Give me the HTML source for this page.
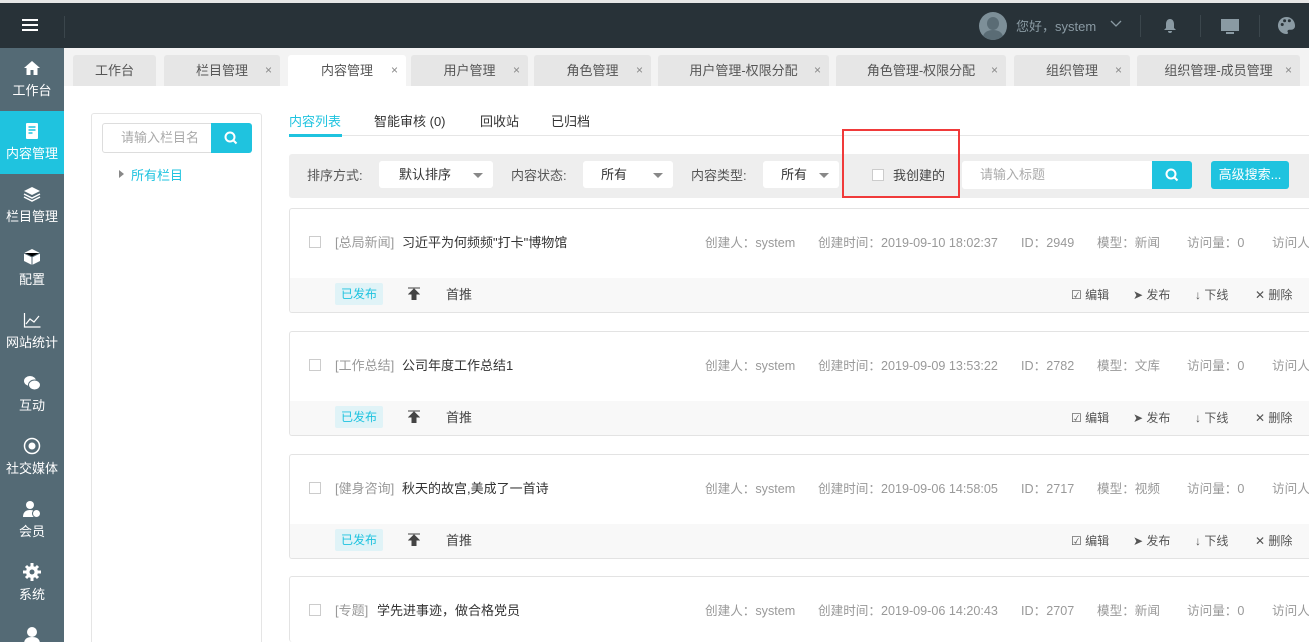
<!DOCTYPE html>
<html style="overflow:hidden"><head><meta charset="utf-8"><style>
*{box-sizing:border-box;margin:0;padding:0}
html,body{width:1309px;height:642px;overflow:hidden}
body{font-family:"Liberation Sans","Noto Sans CJK SC",sans-serif;font-size:13px;color:#333;background:#fff;position:relative}
.abs{position:absolute}
.top{left:0;top:0;width:1309px;height:48px;background:#283238;border-top:3px solid #e6e6e6}
.side{left:0;top:48px;width:64px;height:594px;background:#546a75;overflow:hidden}
.si{position:absolute;left:0;width:64px;height:63px;color:#fff;text-align:center;font-size:13px}
.si .ic{display:block;margin:11px auto 3px;width:18px;height:18px}
.si.act{background:#1fc3df}
.tabbar{left:64px;top:48px;width:1245px;height:38px;background:#f3f3f3;overflow:hidden}
.tab{position:absolute;top:7px;height:31px;background:#e6e6e6;border-radius:3px 3px 0 0;color:#555;font-size:13px;line-height:31px;text-align:center}
.tab.a{background:#fff}
.tab .x{position:absolute;right:8px;top:0;color:#888;font-size:12px}
.tree{left:91px;top:113px;width:171px;height:529px;border:1px solid #e5e5e5;border-bottom:0;border-radius:3px 3px 0 0}
.inp{border:1px solid #ddd;background:#fff;color:#aaa;border-radius:3px}
.btn{background:#1fc3df;color:#fff}
.filter{left:289px;top:154px;width:1020px;height:44px;background:#eeeeee;border-radius:3px 0 0 3px}
.lbl{color:#555;font-size:13px;position:absolute;top:11px}
.sel{position:absolute;top:7px;height:27px;background:#fff;border-radius:3px;font-size:13px;line-height:27px;color:#333}
.sel:after{content:"";position:absolute;right:10px;top:12px;border:5px solid transparent;border-top:5px solid #888;border-bottom:0}
.card{position:absolute;left:289px;width:1020px;height:105px;border:1px solid #e3e3e3;border-right:0;border-radius:3px 0 0 3px;background:#fff;overflow:hidden}
.card .ft{position:absolute;left:0;top:69px;width:100%;height:34px;background:#f8f8f8}
.cb{position:absolute;left:19px;top:27px;width:12px;height:12px;border:1px solid #ccc;background:#fff}
.cat{position:absolute;left:45px;top:23px;color:#999}
.tt{position:absolute;top:23px;color:#333}
.meta{position:absolute;top:23px;color:#999;font-size:12.6px;white-space:nowrap}
.pub{position:absolute;left:45px;top:5px;height:22px;width:48px;background:#e0f3f7;color:#1fc3df;font-size:12px;line-height:22px;text-align:center;border-radius:2px}
.up{position:absolute;left:118px;top:9px}
.tj{position:absolute;left:156px;top:6px;color:#444}
.op{position:absolute;top:8px;color:#555;font-size:12px}
</style></head><body>
<div class="abs top">
  <div class="abs" style="left:22px;top:16px;width:16px;height:2px;background:#fff;box-shadow:0 5px 0 #fff,0 10px 0 #fff"></div>
  <div class="abs" style="left:64px;top:13px;width:1px;height:22px;background:#3b464c"></div>
  <div class="abs" style="left:979px;top:9px;width:28px;height:28px;border-radius:50%;background:#7d8f98;overflow:hidden"><div style="position:absolute;left:8px;top:5px;width:12px;height:13px;border-radius:50%;background:#5a6c75"></div><div style="position:absolute;left:4px;top:18px;width:20px;height:14px;border-radius:50%;background:#5a6c75"></div></div>
  <div class="abs" style="left:1016px;top:13px;color:#8a9aa3;font-size:13px">您好，system</div>
  <svg class="abs" style="left:1110px;top:17px" width="12" height="8" viewBox="0 0 12 8"><path d="M1 1l5 5 5-5" stroke="#8a9aa3" fill="none" stroke-width="1.3"/></svg>
  <div class="abs" style="left:1140px;top:12px;width:1px;height:22px;background:#3b464c"></div>
  <svg class="abs" style="left:1163px;top:15px" width="14" height="15" viewBox="0 0 14 15"><path d="M7 1C4 1 3 4 3 6v4l-2 2h12l-2-2V6c0-2-1-5-4-5zM5 13a2 2 0 0 0 4 0z" fill="#8a9aa3"/></svg>
  <div class="abs" style="left:1200px;top:12px;width:1px;height:22px;background:#3b464c"></div>
  <div class="abs" style="left:1221px;top:16px;width:18px;height:12px;background:#8a9aa3"></div>
  <div class="abs" style="left:1226px;top:29px;width:8px;height:2px;background:#8a9aa3"></div>
  <div class="abs" style="left:1259px;top:12px;width:1px;height:22px;background:#3b464c"></div>
  <svg class="abs" style="left:1277px;top:13px" width="19" height="19" viewBox="0 0 20 20"><path d="M10 1a9 9 0 0 0 0 18c1.5 0 2-1 1.3-2s0-2.5 1.5-2.5H15a4 4 0 0 0 4-4C19 5 15 1 10 1z" fill="#8a9aa3"/><circle cx="5.5" cy="9" r="1.6" fill="#283238"/><circle cx="8" cy="5" r="1.6" fill="#283238"/><circle cx="13" cy="5" r="1.6" fill="#283238"/></svg>
</div>
<div class="abs side">
  <div class="si" style="top:0"><svg class="ic" viewBox="0 0 18 18"><path d="M9 2L1 9h2.5v7h4v-5h3v5h4V9H17z" fill="#fff"/></svg>工作台</div>
  <div class="si act" style="top:63px"><svg class="ic" viewBox="0 0 18 18"><rect x="3" y="1" width="12" height="16" rx="1" fill="#fff"/><path d="M5.5 5h7M5.5 8h7M5.5 11h4" stroke="#1fc3df" stroke-width="1.5"/></svg>内容管理</div>
  <div class="si" style="top:126px"><svg class="ic" viewBox="0 0 18 18"><path d="M9 2l8 4-8 4-8-4z" fill="#fff"/><path d="M1 9l8 4 8-4M1 12l8 4 8-4" stroke="#fff" stroke-width="1.5" fill="none"/></svg>栏目管理</div>
  <div class="si" style="top:189px"><svg class="ic" viewBox="0 0 18 18"><path d="M9 1l8 4v8l-8 4-8-4V5z" fill="#fff"/><path d="M1 5l8 4 8-4M9 9v8" stroke="#546a75" stroke-width="1"/></svg>配置</div>
  <div class="si" style="top:252px"><svg class="ic" viewBox="0 0 18 18"><path d="M1.5 2v14h16M3 13l4-5 4 3 5-6" stroke="#fff" stroke-width="1.2" fill="none"/></svg>网站统计</div>
  <div class="si" style="top:315px"><svg class="ic" viewBox="0 0 18 18"><ellipse cx="7" cy="7" rx="6" ry="5" fill="#fff"/><ellipse cx="11.5" cy="11" rx="6" ry="5" fill="#fff" stroke="#546a75"/></svg>互动</div>
  <div class="si" style="top:378px"><svg class="ic" viewBox="0 0 18 18"><circle cx="9" cy="9" r="7.5" stroke="#fff" stroke-width="1.5" fill="none"/><circle cx="9" cy="9" r="3.5" fill="#fff"/></svg>社交媒体</div>
  <div class="si" style="top:441px"><svg class="ic" viewBox="0 0 18 18"><circle cx="7" cy="5" r="4" fill="#fff"/><path d="M0 17c0-5 3-7 7-7s6 2 6 3v4z" fill="#fff"/><circle cx="13.5" cy="13.5" r="4" fill="#fff" stroke="#546a75"/></svg>会员</div>
  <div class="si" style="top:504px"><svg class="ic" viewBox="0 0 18 18"><circle cx="9" cy="9" r="6" fill="#fff"/><path d="M9 0v18M0 9h18M3 3l12 12M15 3L3 15" stroke="#fff" stroke-width="3"/><circle cx="9" cy="9" r="2.5" fill="#546a75"/></svg>系统</div>
  <div class="si" style="top:567px;height:27px;overflow:hidden"><svg class="ic" viewBox="0 0 18 18"><circle cx="9" cy="6" r="5" fill="#fff"/><path d="M1 18c0-5 3-7 8-7s8 2 8 7z" fill="#fff"/></svg></div>
</div>
<div class="abs tabbar">
  <div class="tab" style="left:9px;width:83px">工作台</div>
  <div class="tab" style="left:100px;width:116px">栏目管理<span class="x">×</span></div>
  <div class="tab a" style="left:224px;width:118px">内容管理<span class="x">×</span></div>
  <div class="tab" style="left:347px;width:117px">用户管理<span class="x">×</span></div>
  <div class="tab" style="left:470px;width:117px">角色管理<span class="x">×</span></div>
  <div class="tab" style="left:594px;width:171px">用户管理-权限分配<span class="x">×</span></div>
  <div class="tab" style="left:772px;width:170px">角色管理-权限分配<span class="x">×</span></div>
  <div class="tab" style="left:950px;width:116px">组织管理<span class="x">×</span></div>
  <div class="tab" style="left:1073px;width:163px">组织管理-成员管理<span class="x">×</span></div>
</div>
<div class="abs tree">
  <div class="abs inp" style="left:10px;top:9px;width:112px;height:30px;line-height:28px;padding-left:18px">请输入栏目名</div>
  <div class="abs btn" style="left:119px;top:9px;width:41px;height:30px;border-radius:0 3px 3px 0"><svg style="margin:8px 13px" width="14" height="14" viewBox="0 0 14 14"><circle cx="6" cy="6" r="4.5" stroke="#fff" stroke-width="2" fill="none"/><path d="M9.5 9.5l3 3" stroke="#fff" stroke-width="2"/></svg></div>
  <div class="abs" style="left:27px;top:56px;border:4px solid transparent;border-left:5px solid #888"></div>
  <div class="abs" style="left:39px;top:51px;color:#1fc3df">所有栏目</div>
</div>
<div class="abs" style="left:289px;top:111px;color:#1fc3df">内容列表</div>
<div class="abs" style="left:289px;top:135px;width:1020px;height:1px;background:#e6e6e6"></div>
<div class="abs" style="left:289px;top:134px;width:53px;height:3px;background:#1fc3df"></div>
<div class="abs" style="left:374px;top:111px">智能审核 (0)</div>
<div class="abs" style="left:480px;top:111px">回收站</div>
<div class="abs" style="left:551px;top:111px">已归档</div>
<div class="abs filter">
  <span class="lbl" style="left:18px">排序方式:</span>
  <div class="sel" style="left:90px;width:114px;padding-left:20px">默认排序</div>
  <span class="lbl" style="left:222px">内容状态:</span>
  <div class="sel" style="left:294px;width:90px;padding-left:18px">所有</div>
  <span class="lbl" style="left:402px">内容类型:</span>
  <div class="sel" style="left:474px;width:76px;padding-left:18px">所有</div>
  <div class="abs" style="left:583px;top:15px;width:12px;height:12px;border:1px solid #ccc;background:#fff"></div>
  <span class="lbl" style="left:604px;color:#444">我创建的</span>
  <div class="abs inp" style="left:673px;top:7px;width:192px;height:28px;border:0;line-height:28px;padding-left:18px">请输入标题</div>
  <div class="abs btn" style="left:863px;top:7px;width:40px;height:28px;border-radius:0 3px 3px 0"><svg style="margin:7px 13px" width="14" height="14" viewBox="0 0 14 14"><circle cx="6" cy="6" r="4.5" stroke="#fff" stroke-width="2" fill="none"/><path d="M9.5 9.5l3 3" stroke="#fff" stroke-width="2"/></svg></div>
  <div class="abs btn" style="left:922px;top:7px;width:78px;height:28px;border-radius:3px;line-height:28px;text-align:center">高级搜索...</div>
</div>
<div class="abs" style="left:842px;top:129px;width:118px;height:69px;border:2px solid #f03a3a"></div>

<div class="card" style="top:208px"><div class="cb"></div><span class="cat">[总局新闻]</span><span class="tt" style="left:112px">习近平为何频频"打卡"博物馆</span>
<span class="meta" style="left:415px">创建人：system</span><span class="meta" style="left:528px">创建时间：2019-09-10 18:02:37</span><span class="meta" style="left:731px">ID：2949</span><span class="meta" style="left:807px">模型：新闻</span><span class="meta" style="left:897px">访问量：0</span><span class="meta" style="left:982px">访问人</span>
<div class="ft"><div class="pub">已发布</div><svg class="up" width="12" height="13" viewBox="0 0 12 13"><path d="M0 1h12M6 2L1 7h3v6h4V7h3z" stroke="#444" fill="#444"/></svg><span class="tj">首推</span>
<span class="op" style="left:781px">☑ 编辑</span><span class="op" style="left:843px">➤ 发布</span><span class="op" style="left:905px">↓ 下线</span><span class="op" style="left:965px">✕ 删除</span></div></div>

<div class="card" style="top:331px"><div class="cb"></div><span class="cat">[工作总结]</span><span class="tt" style="left:112px">公司年度工作总结1</span>
<span class="meta" style="left:415px">创建人：system</span><span class="meta" style="left:528px">创建时间：2019-09-09 13:53:22</span><span class="meta" style="left:731px">ID：2782</span><span class="meta" style="left:807px">模型：文库</span><span class="meta" style="left:897px">访问量：0</span><span class="meta" style="left:982px">访问人</span>
<div class="ft"><div class="pub">已发布</div><svg class="up" width="12" height="13" viewBox="0 0 12 13"><path d="M0 1h12M6 2L1 7h3v6h4V7h3z" stroke="#444" fill="#444"/></svg><span class="tj">首推</span>
<span class="op" style="left:781px">☑ 编辑</span><span class="op" style="left:843px">➤ 发布</span><span class="op" style="left:905px">↓ 下线</span><span class="op" style="left:965px">✕ 删除</span></div></div>

<div class="card" style="top:454px"><div class="cb"></div><span class="cat">[健身咨询]</span><span class="tt" style="left:112px">秋天的故宫,美成了一首诗</span>
<span class="meta" style="left:415px">创建人：system</span><span class="meta" style="left:528px">创建时间：2019-09-06 14:58:05</span><span class="meta" style="left:731px">ID：2717</span><span class="meta" style="left:807px">模型：视频</span><span class="meta" style="left:897px">访问量：0</span><span class="meta" style="left:982px">访问人</span>
<div class="ft"><div class="pub">已发布</div><svg class="up" width="12" height="13" viewBox="0 0 12 13"><path d="M0 1h12M6 2L1 7h3v6h4V7h3z" stroke="#444" fill="#444"/></svg><span class="tj">首推</span>
<span class="op" style="left:781px">☑ 编辑</span><span class="op" style="left:843px">➤ 发布</span><span class="op" style="left:905px">↓ 下线</span><span class="op" style="left:965px">✕ 删除</span></div></div>

<div class="card" style="top:576px;height:66px;border-bottom:0"><div class="cb"></div><span class="cat">[专题]</span><span class="tt" style="left:87px">学先进事迹，做合格党员</span>
<span class="meta" style="left:415px">创建人：system</span><span class="meta" style="left:528px">创建时间：2019-09-06 14:20:43</span><span class="meta" style="left:731px">ID：2707</span><span class="meta" style="left:807px">模型：新闻</span><span class="meta" style="left:897px">访问量：0</span><span class="meta" style="left:982px">访问人</span></div>
</body></html>
